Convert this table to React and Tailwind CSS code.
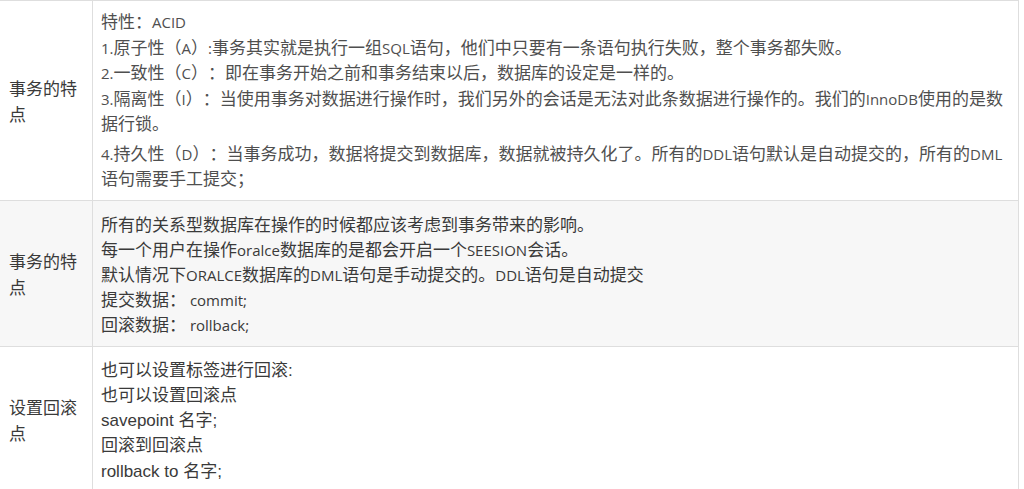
const cjk = '"Open Sans", "Noto Sans CJK SC", sans-serif';
const arial = '"Liberation Sans", "Noto Sans CJK SC", sans-serif';

// latin runs are drawn smaller than the chinese text, as in the original page
const Line = ({ text, className = '' }) => (
  <p className={className}>
    {text.split(/([\x00-\x7F]+)/).map((part, i) =>
      /[\x00-\x7F]/.test(part) ? (
        <span key={i} className="text-[15px] leading-none">{part}</span>
      ) : (
        part
      )
    )}
  </p>
);

const rows = [
  {
    label: '事务的特点',
    bg: 'bg-white',
    body: (
      <div className="pt-[8px] pb-[8px] leading-[25.5px] text-[#4f4f4f]" style={{ fontFamily: cjk }}>
        <Line text="特性：ACID" />
        <Line text="1.原子性（A）:事务其实就是执行一组SQL语句，他们中只要有一条语句执行失败，整个事务都失败。" />
        <Line text="2.一致性（C）：即在事务开始之前和事务结束以后，数据库的设定是一样的。" />
        <Line text="3.隔离性（I）：当使用事务对数据进行操作时，我们另外的会话是无法对此条数据进行操作的。我们的InnoDB使用的是数据行锁。" />
        <Line className="mt-[4px]" text="4.持久性（D）：当事务成功，数据将提交到数据库，数据就被持久化了。所有的DDL语句默认是自动提交的，所有的DML语句需要手工提交；" />
      </div>
    ),
  },
  {
    label: '事务的特点',
    bg: 'bg-[#f7f7f7]',
    body: (
      <div className="pt-[11px] pb-[9px] leading-[25px] text-[#3a3a3a]" style={{ fontFamily: cjk }}>
        <Line text="所有的关系型数据库在操作的时候都应该考虑到事务带来的影响。" />
        <Line text="每一个用户在操作oralce数据库的是都会开启一个SEESION会话。" />
        <Line text="默认情况下ORALCE数据库的DML语句是手动提交的。DDL语句是自动提交" />
        <Line text="提交数据： commit;" />
        <Line text="回滚数据： rollback;" />
      </div>
    ),
  },
  {
    label: '设置回滚点',
    bg: 'bg-white',
    body: (
      <div className="pt-[11px] pb-[8px] leading-[25.25px] text-[#3a3a3a]" style={{ fontFamily: arial }}>
        <p>也可以设置标签进行回滚:</p>
        <p>也可以设置回滚点</p>
        <p>savepoint 名字;</p>
        <p>回滚到回滚点</p>
        <p>rollback to 名字;</p>
      </div>
    ),
  },
];

export default function App() {
  return (
    <div className="w-[1024px] h-[489px] overflow-hidden bg-white text-[17px] [text-spacing-trim:space-all]">
      <div className="w-[1019px] border-t border-[#dedede]">
        {rows.map((row, i) => (
          <div key={i} className={`flex border-b border-[#dedede] ${row.bg}`}>
            <div
              className="w-[93px] shrink-0 border-r border-[#dedede] pl-[9px] pr-[8px] pt-[3px] flex items-center leading-[26px] text-[#3a3a3a]"
              style={{ fontFamily: cjk }}
            >
              {row.label}
            </div>
            <div className="flex-1 border-r border-[#dedede] pl-[8px] pr-[8px]">{row.body}</div>
          </div>
        ))}
      </div>
    </div>
  );
}
